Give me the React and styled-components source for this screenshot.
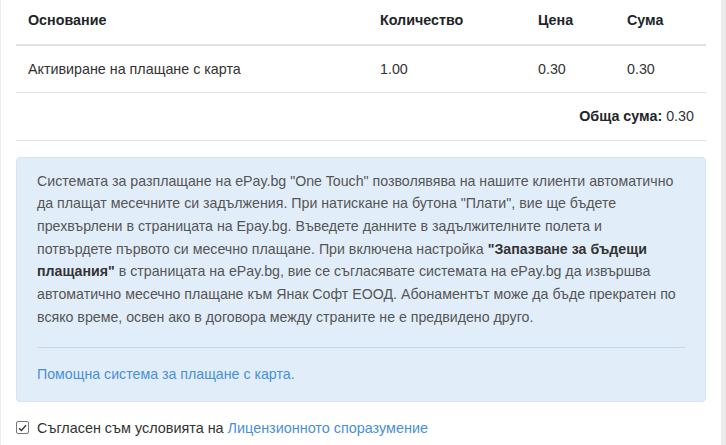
import React from 'react';
import styled, { createGlobalStyle } from 'styled-components';

const GlobalStyle = createGlobalStyle`
  html, body {
    margin: 0;
    padding: 0;
    background: #ececec;
  }
  body {
    font-family: "Liberation Sans", Arial, sans-serif;
    font-size: 14.3px;
    line-height: 1.5;
    color: #212529;
  }
`;

const Page = styled.div`
  width: 721px;
  height: 445px;
  overflow: hidden;
  background: #fff;
  border-left: 1px solid #eeeeee;
  box-sizing: border-box;
  padding: 0 15px;
`;

const Table = styled.table`
  width: 690px;
  margin-top: -3px;
  border-collapse: collapse;
  table-layout: fixed;
`;

const Th = styled.th`
  text-align: left;
  font-weight: 700;
  padding: 12px;
  line-height: 22.5px;
  border-bottom: 2px solid #dee2e6;
  width: ${p => p.w - 24}px;
`;

const Td = styled.td`
  padding: 12px;
  line-height: 22.5px;
  border-bottom: 1px solid #dee2e6;
  text-align: ${p => (p.right ? 'right' : 'left')};
  color: #333;
`;

const TotalLabel = styled.strong`
  color: #212529;
`;

const Alert = styled.div`
  margin-top: 16px;
  background: #e1eefa;
  border: 1px solid #d3e5f6;
  border-radius: 4px;
  padding: 12px 20px 15px;
  color: #555;
  font-size: 14.2px;
`;

const Text = styled.p`
  margin: 0;
  line-height: 22.7px;
  white-space: nowrap;
`;

const Bold = styled.strong`
  color: #333;
`;

const Divider = styled.hr`
  border: 0;
  border-top: 1px solid #bcd8f1;
  margin: 19px 0 16px;
`;

const Link = styled.a`
  color: #4a8fd8;
  text-decoration: none;
`;

const Agree = styled.label`
  display: flex;
  align-items: center;
  gap: 8px;
  margin-top: 15px;
  color: #333;
  line-height: 22px;
  font-size: 14.4px;
`;

const Box = styled.span`
  width: 13px;
  height: 13px;
  box-sizing: border-box;
  border: 1px solid #767676;
  border-radius: 2px;
  display: inline-flex;
  align-items: center;
  justify-content: center;
  background: #fff;
`;

export default function App() {
  return (
    <>
      <GlobalStyle />
      <Page>
        <Table>
          <thead>
            <tr>
              <Th w={352}>Основание</Th>
              <Th w={158}>Количество</Th>
              <Th w={89}>Цена</Th>
              <Th w={91}>Сума</Th>
            </tr>
          </thead>
          <tbody>
            <tr>
              <Td>Активиране на плащане с карта</Td>
              <Td>1.00</Td>
              <Td>0.30</Td>
              <Td>0.30</Td>
            </tr>
            <tr>
              <Td colSpan={4} right>
                <TotalLabel>Обща сума:</TotalLabel> 0.30
              </Td>
            </tr>
          </tbody>
        </Table>
        <Alert>
          <Text>
            Системата за разплащане на ePay.bg "One Touch" позволявява на нашите клиенти автоматично<br />
            да плащат месечните си задължения. При натискане на бутона "Плати", вие ще бъдете<br />
            прехвърлени в страницата на Epay.bg. Въведете данните в задължителните полета и<br />
            потвърдете първото си месечно плащане. При включена настройка <Bold>"Запазване за бъдещи</Bold><br />
            <Bold>плащания"</Bold> в страницата на ePay.bg, вие се съгласявате системата на ePay.bg да извършва<br />
            автоматично месечно плащане към Янак Софт ЕООД. Абонаментът може да бъде прекратен по<br />
            всяко време, освен ако в договора между страните не е предвидено друго.
          </Text>
          <Divider />
          <Link href="#">Помощна система за плащане с карта.</Link>
        </Alert>
        <Agree>
          <Box>
            <svg width="9" height="8" viewBox="0 0 9 8">
              <path d="M1 4.2 L3.4 6.5 L8 1.2" fill="none" stroke="#333" strokeWidth="1.3" />
            </svg>
          </Box>
          <span>
            Съгласен съм условията на <Link href="#">Лицензионното споразумение</Link>
          </span>
        </Agree>
      </Page>
    </>
  );
}
